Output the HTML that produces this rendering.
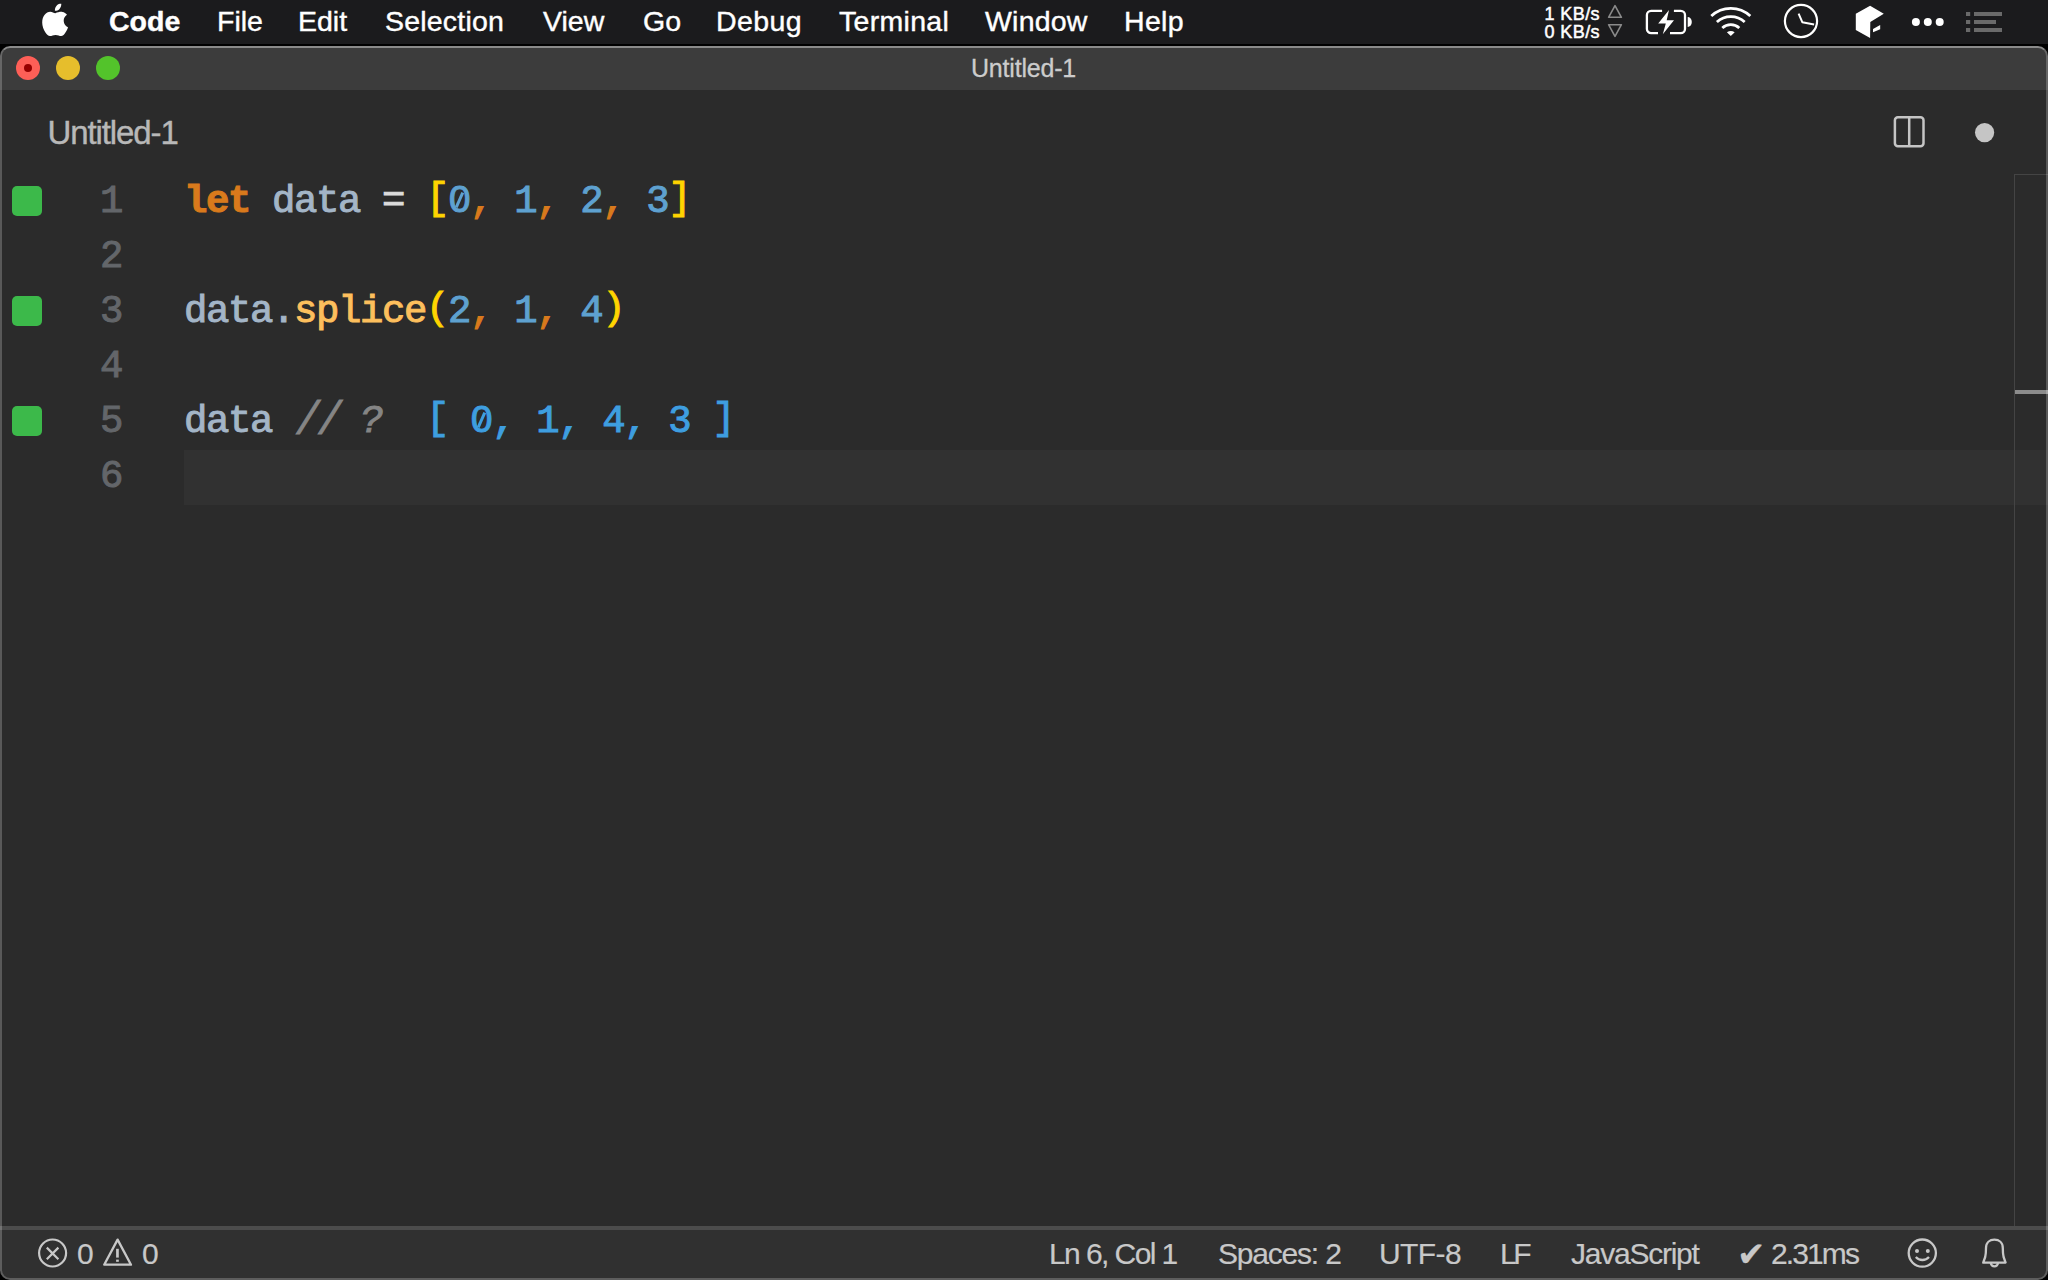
<!DOCTYPE html>
<html><head><meta charset="utf-8">
<style>
*{margin:0;padding:0;box-sizing:border-box}
html,body{width:2048px;height:1280px;overflow:hidden;background:#000}
body{position:relative;font-family:"Liberation Sans",sans-serif}
.a{position:absolute;white-space:pre}
svg{position:absolute;overflow:visible}
#menubar{position:absolute;left:0;top:0;width:2048px;height:44px;background:#1b1b1d}
#menubar .m{position:absolute;top:-1px;height:44px;line-height:44px;color:#fff;font-size:28.5px;-webkit-text-stroke:0.4px #fff}
#win{position:absolute;left:0;top:46px;width:2048px;height:1234px;border-radius:10px;background:#2b2b2b;overflow:hidden}
#frame{position:absolute;left:0;top:0;width:2048px;height:1234px;border:2px solid rgba(255,255,255,0.22);border-top-color:rgba(255,255,255,0.4);border-radius:10px;z-index:10}
#titlebar{position:absolute;left:0;top:0;width:2048px;height:44px;background:#3c3c3c}
.light{position:absolute;top:10px;width:24px;height:24px;border-radius:50%}
.num{position:absolute;left:62px;width:60px;text-align:right;color:#63666a;font-family:"Liberation Mono",monospace;font-size:39px;line-height:55px;letter-spacing:-1.4px;-webkit-text-stroke-width:1px}
.code{position:absolute;left:184px;font-family:"Liberation Mono",monospace;font-size:39px;line-height:55px;letter-spacing:-1.4px;color:#a3b5c7;white-space:pre;-webkit-text-stroke-width:1px}
.mark{position:absolute;left:12px;width:30px;height:30px;border-radius:5px;background:#3cb94a}
#status{position:absolute;left:0;top:1180px;width:2048px;height:54px;background:#303030;border-top:4px solid #4c4c4c}
.s{position:absolute;top:-1.5px;height:50px;line-height:50px;color:#c8c8c8;font-size:30px;-webkit-text-stroke:0.2px #c8c8c8}
.kw{color:#d97a1c;font-weight:bold}
.op{color:#dcdcdc}
.br{color:#ffd400;position:relative;top:-3px}
.n{color:#5ea1d0}
.cm{color:#d97a1c}
.fn{color:#fdbf5d}
.co{color:#858585;font-style:italic}
.q{color:#3e9ee0}
.z{position:relative;display:inline-block}
.z::before{content:"";position:absolute;left:7px;top:20px;width:8px;height:10px;background:#2b2b2b}
.z::after{content:"";position:absolute;left:9.5px;top:17px;width:3px;height:16px;background:currentColor;transform:rotate(24deg)}
</style></head>
<body>
<div id="menubar">
  <svg style="left:36px;top:0" width="40" height="42" viewBox="0 0 40 42">
    <path fill="#fff" d="M19.4 13.3C21.5 12.2 24.5 11.6 26.5 11.9C28.3 12.2 29.8 13.2 31.0 14.8C28.8 16.2 27.6 18.4 27.7 21.0C27.8 24.0 29.5 26.2 32.0 27.3C31.4 29.5 30.2 31.8 28.8 33.6C27.8 35.0 26.8 36.0 25.2 36.1C23.4 36.1 22.0 34.9 19.6 34.9C17.2 34.9 15.8 36.1 14.0 36.1C12.2 36.1 10.8 34.6 9.6 32.8C7.4 29.5 6.2 26.0 6.2 22.6C6.2 16.0 10.2 11.8 14.2 11.8C16.4 11.8 17.6 13.0 19.4 13.3Z"/>
    <path fill="#fff" d="M18.9 10.8C18.8 8.5 19.5 6.6 21.0 5.2C22.2 4.2 23.8 3.7 25.3 3.8C25.4 5.9 24.6 7.9 23.3 9.2C22.2 10.3 20.5 10.9 18.9 10.8Z"/>
  </svg>
  <div class="m" style="left:109px;font-weight:bold">Code</div>
  <div class="m" style="left:217px">File</div>
  <div class="m" style="left:298px">Edit</div>
  <div class="m" style="left:385px;letter-spacing:0.2px">Selection</div>
  <div class="m" style="left:543px">View</div>
  <div class="m" style="left:643px">Go</div>
  <div class="m" style="left:716px;letter-spacing:0.4px">Debug</div>
  <div class="m" style="left:839px;letter-spacing:0.3px">Terminal</div>
  <div class="m" style="left:985px;letter-spacing:0.2px">Window</div>
  <div class="m" style="left:1124px;letter-spacing:0.3px">Help</div>
  <div class="a" style="left:1540px;top:6px;font-size:18px;line-height:17.6px;color:#fff;text-align:right;width:60px;letter-spacing:0.4px;-webkit-text-stroke:0.5px #fff">1 KB/s<br>0 KB/s</div>
  <svg style="left:0;top:0" width="2048" height="44">
    <!-- net arrows -->
    <path d="M1615 5.6L1621.4 17.3H1608.6Z" fill="none" stroke="#8a8a8a" stroke-width="1.6" stroke-linejoin="round"/>
    <path d="M1615 36.4L1621.4 24.7H1608.6Z" fill="none" stroke="#8a8a8a" stroke-width="1.6" stroke-linejoin="round"/>
    <!-- battery -->
    <path d="M1662.1 10.9H1651.1A4.2 4.2 0 0 0 1646.9 15.1V28.9A4.2 4.2 0 0 0 1651.1 33.1H1658M1670 33.1H1680.8A4.2 4.2 0 0 0 1685 28.9V15.1A4.2 4.2 0 0 0 1680.8 10.9H1673.9" fill="none" stroke="#fff" stroke-width="2.3"/>
    <path d="M1687.7 17A4.1 5 0 0 1 1687.7 27Z" fill="#fff"/>
    <path d="M1669 10L1658.2 23.4H1665.8L1662.8 34.3L1674 20.2H1666.7Z" fill="#fff"/>
    <!-- wifi -->
    <g fill="none" stroke="#fff" stroke-width="2.8" stroke-linecap="butt">
      <path d="M1711.3 16.1A28.6 28.6 0 0 1 1750.3 16.1"/>
      <path d="M1716.9 22.1A20.4 20.4 0 0 1 1744.7 22.1"/>
      <path d="M1722.3 27.9A12.4 12.4 0 0 1 1739.3 27.9"/>
    </g>
    <path d="M1730.8 36L1726.9 32.2Q1730.8 29.8 1734.7 32.2Z" fill="#fff"/>
    <!-- clock -->
    <circle cx="1801" cy="21" r="16.1" fill="none" stroke="#fff" stroke-width="2.2"/>
    <path d="M1798.6 13.6L1802.3 22.2L1814.1 24.6" fill="none" stroke="#fff" stroke-width="2" stroke-linejoin="round"/>
    <!-- box -->
    <path d="M1870.1 5.7L1883.8 13.7L1870.3 22L1870.1 38.1L1855.8 29.9L1855.8 13.7Z" fill="#fff"/>
    <path d="M1873 28.9L1880.2 25.1L1880.2 29.2L1873 32.3Z" fill="#fff"/>
    <!-- dots -->
    <circle cx="1915.9" cy="22" r="4" fill="#fff"/>
    <circle cx="1927.8" cy="22" r="4" fill="#fff"/>
    <circle cx="1939.7" cy="22" r="4" fill="#fff"/>
    <!-- list -->
    <g fill="#6a6a6a">
      <rect x="1966" y="12" width="4.2" height="4"/>
      <rect x="1966" y="20" width="4.2" height="4"/>
      <rect x="1966" y="28" width="4.2" height="4"/>
      <rect x="1974" y="12" width="28" height="4"/>
      <rect x="1974" y="20" width="22" height="4"/>
      <rect x="1974" y="28" width="28" height="4"/>
    </g>
  </svg>
</div>
<div id="win">
  <div id="titlebar">
    <div class="light" style="left:16px;background:#fe5f57"><div style="position:absolute;left:8px;top:8px;width:8px;height:8px;border-radius:50%;background:#960000"></div></div>
    <div class="light" style="left:56px;background:#e6be2c"></div>
    <div class="light" style="left:96px;background:#53c32b"></div>
    <div class="a" style="left:971px;top:0px;line-height:44px;font-size:25px;color:#cccccc;letter-spacing:-0.2px;-webkit-text-stroke:0.3px #cccccc">Untitled-1</div>
  </div>
  <div class="a" style="left:47.5px;top:45px;line-height:84px;font-size:33px;color:#b8b8b8;letter-spacing:-1.1px;-webkit-text-stroke:0.4px #b8b8b8">Untitled-1</div>
  <svg style="left:0;top:0" width="2048" height="1234">
    <!-- split editor icon -->
    <rect x="1894.9" y="71.3" width="28.6" height="29" rx="3" fill="none" stroke="#c5c5c5" stroke-width="2.5"/>
    <line x1="1909.2" y1="71" x2="1909.2" y2="100.5" stroke="#c5c5c5" stroke-width="2.5"/>
    <circle cx="1984.6" cy="86.6" r="9.6" fill="#c5c5c5"/>
    <!-- overview ruler -->
    <line x1="2014.5" y1="128" x2="2014.5" y2="1180" stroke="#444" stroke-width="1"/>
    <line x1="2014" y1="128.5" x2="2048" y2="128.5" stroke="#444" stroke-width="1"/>
  </svg>
  <!-- current line -->
  <div style="position:absolute;left:184px;top:404px;width:1830px;height:55px;background:#313131"></div>
  <div style="position:absolute;left:2015px;top:404px;width:33px;height:55px;background:#313131"></div>
  <div style="position:absolute;left:2015px;top:344px;width:33px;height:4px;background:#8c8c8c"></div>
  <!-- editor lines -->
  <div class="mark" style="top:140px"></div>
  <div class="mark" style="top:250px"></div>
  <div class="mark" style="top:360px"></div>
  <div class="num" style="top:129px">1</div>
  <div class="num" style="top:184px">2</div>
  <div class="num" style="top:239px">3</div>
  <div class="num" style="top:294px">4</div>
  <div class="num" style="top:349px">5</div>
  <div class="num" style="top:404px">6</div>
  <div class="code" style="top:129px"><span class="kw">let</span> data <span class="op">=</span> <span class="br">[</span><span class="n z">0</span><span class="cm">,</span> <span class="n">1</span><span class="cm">,</span> <span class="n">2</span><span class="cm">,</span> <span class="n">3</span><span class="br">]</span></div>
  <div class="code" style="top:239px">data.<span class="fn">splice</span><span class="br">(</span><span class="n">2</span><span class="cm">,</span> <span class="n">1</span><span class="cm">,</span> <span class="n">4</span><span class="br">)</span></div>
  <div class="code" style="top:349px">data <span class="co"><span style="display:inline-block;transform:translateX(2px) scaleY(1.2)">//</span> ?</span>  <span class="q"><span class="br" style="color:inherit">[</span> <span class="z">0</span>, 1, 4, 3 <span class="br" style="color:inherit">]</span></span></div>
  <div id="status">
    <svg style="left:0;top:-4px" width="2048" height="54">
      <!-- error -->
      <circle cx="52.6" cy="27" r="13.5" fill="none" stroke="#c8c8c8" stroke-width="2.2"/>
      <path d="M46.8 21.6L58.4 33.2M58.4 21.6L46.8 33.2" stroke="#c8c8c8" stroke-width="2.2"/>
      <!-- warning -->
      <path d="M117.6 13.6L131 38.7H104.2Z" fill="none" stroke="#c8c8c8" stroke-width="2.3" stroke-linejoin="round"/>
      <rect x="116.1" y="22.8" width="2.7" height="8.8" fill="#c8c8c8"/>
      <rect x="116.1" y="33.6" width="2.7" height="2.2" fill="#c8c8c8"/>
      <!-- smiley -->
      <circle cx="1922.3" cy="27.1" r="13.6" fill="none" stroke="#c8c8c8" stroke-width="2.3"/>
      <circle cx="1917" cy="25" r="2" fill="#c8c8c8"/>
      <circle cx="1927.8" cy="25" r="2" fill="#c8c8c8"/>
      <path d="M1915.8 31A8.8 8.8 0 0 0 1929 31" fill="none" stroke="#c8c8c8" stroke-width="2.3"/>
      <!-- bell -->
      <path d="M1983.2 36.6H2005.6L2003.6 31C2002.8 28 2002.8 24 2002.8 22C2002.8 16.5 1999 13.6 1994.4 13.6C1989.8 13.6 1986 16.5 1986 22C1986 24 1986 28 1985.2 31Z" fill="none" stroke="#c8c8c8" stroke-width="2.3" stroke-linejoin="round"/>
      <path d="M1990.8 36.8A3.6 3.6 0 0 0 1998 36.8" fill="none" stroke="#c8c8c8" stroke-width="2.3"/>
    </svg>
    <div class="s" style="left:77px">0</div>
    <div class="s" style="left:142px">0</div>
    <div class="s" style="left:1049px;letter-spacing:-1.58px">Ln 6, Col 1</div>
    <div class="s" style="left:1218px;letter-spacing:-1.2px">Spaces: 2</div>
    <div class="s" style="left:1379px;letter-spacing:-0.6px">UTF-8</div>
    <div class="s" style="left:1500px;letter-spacing:-3.5px">LF</div>
    <div class="s" style="left:1571px;letter-spacing:-1.24px">JavaScript</div>
    <div class="s" style="left:1737px;font-size:34px">✔</div>
    <div class="s" style="left:1771px;letter-spacing:-1.9px">2.31ms</div>
  </div>
  <div id="frame"></div>
</div>
</body></html>
